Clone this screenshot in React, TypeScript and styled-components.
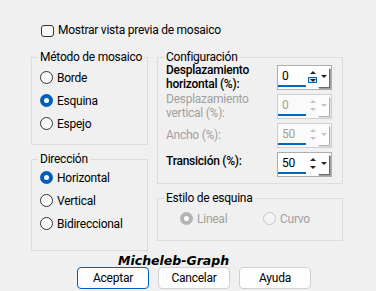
import React from "react";
import styled, { createGlobalStyle, css } from "styled-components";

const GlobalStyle = createGlobalStyle`
  html, body { margin: 0; padding: 0; background: #f0f0f0; }
  body { font-family: Roboto, "Noto Sans", sans-serif; font-size: 12px; letter-spacing: -0.25px; color: #000; }
  * { box-sizing: border-box; }
`;

const Dialog = styled.div`
  width: 376px;
  height: 291px;
  padding: 23px 0 0 31px;
  display: flex;
  flex-direction: column;
`;

const CheckRow = styled.label`
  display: flex;
  align-items: center;
  gap: 4px;
  height: 15px;
  padding-left: 10px;
  line-height: 15px;
`;

const CheckBox = styled.span`
  width: 13px;
  height: 12px;
  border: 1px solid #333;
  border-radius: 3px;
  background: #f9f9f9;
`;

const Columns = styled.div`
  display: flex;
  gap: 9px;
  margin-top: 12px;
`;

const Column = styled.div<{ $w: number }>`
  width: ${(p) => p.$w}px;
  display: flex;
  flex-direction: column;
  gap: 7px;
`;

const Group = styled.fieldset<{ $h: number; $pt?: number }>`
  margin: 0;
  min-width: 0;
  height: ${(p) => p.$h}px;
  border: 1px solid #dcdcdc;
  padding: ${(p) => p.$pt ?? 0}px 4px 0 8px;
`;

const Legend = styled.legend`
  padding: 0 2px;
  margin-left: -2px;
  line-height: 14px;
  font-size: 12px;
  white-space: nowrap;
`;

const RadioRow = styled.div<{ $disabled?: boolean; $w?: number }>`
  display: flex;
  align-items: center;
  gap: 4px;
  height: 23px;
  color: ${(p) => (p.$disabled ? "#a0a0a0" : "#000")};
  ${(p) => p.$w && css`width: ${p.$w}px;`}
`;

const RadioCircle = styled.span<{ $checked?: boolean; $disabled?: boolean }>`
  width: 13px;
  height: 13px;
  border-radius: 50%;
  display: flex;
  align-items: center;
  justify-content: center;
  flex: none;
  ${(p) =>
    p.$checked
      ? css`
          background: ${p.$disabled ? "#b4b4b4" : "#005fb8"};
          &::after {
            content: "";
            width: 5px;
            height: 5px;
            border-radius: 50%;
            background: #fff;
          }
        `
      : css`
          border: 1px solid ${p.$disabled ? "#c6c6c6" : "#333"};
          background: ${p.$disabled ? "#f3f3f3" : "#f9f9f9"};
        `}
`;

const Radio = ({ label, checked, disabled, w }: { label: string; checked?: boolean; disabled?: boolean; w?: number }) => (
  <RadioRow $disabled={disabled} $w={w}>
    <RadioCircle $checked={checked} $disabled={disabled} />
    <span>{label}</span>
  </RadioRow>
);

const ConfigGrid = styled.div`
  display: grid;
  grid-template-columns: 1fr 55px;
  grid-auto-rows: 25px;
  row-gap: 4px;
  margin-top: 1px;
  margin-right: 6px;
  align-items: center;
`;

const FieldLabel = styled.div<{ $disabled?: boolean; $strong?: boolean; $lift?: number }>`
  line-height: 13.5px;
  white-space: nowrap;
  color: ${(p) => (p.$disabled ? "#a0a0a0" : "#000")};
  font-weight: ${(p) => (p.$strong ? 500 : 400)};
  ${(p) => p.$lift && css`margin-top: -${p.$lift}px;`}
`;

const Spin = styled.div<{ $disabled?: boolean }>`
  width: 55px;
  height: 25px;
  border: 1px solid ${(p) => (p.$disabled ? "#cfcfcf" : "#adadad")};
  background: ${(p) => (p.$disabled ? "#fafafa" : "#fff")};
  display: flex;
  align-items: stretch;
  color: ${(p) => (p.$disabled ? "#a0a0a0" : "#000")};
`;

const SpinField = styled.div`
  width: 28px;
  margin: 0 0 2px 0;
  padding-left: 4px;
  border-bottom: 2px solid #0067c0;
  line-height: 21px;
`;

const Arrows = styled.div`
  width: 9px;
  margin-left: 2px;
  display: flex;
  flex-direction: column;
  align-items: center;
  padding-top: 3px;
  gap: 2px;
`;

const ArrowBox = styled.div<{ $hot?: boolean }>`
  width: 9px;
  height: 6px;
  display: flex;
  align-items: center;
  justify-content: center;
  border: 1px solid ${(p) => (p.$hot ? "#0067c0" : "transparent")};
  background: ${(p) => (p.$hot ? "#cce4f7" : "transparent")};
`;

const Tri = styled.span<{ $down?: boolean; $disabled?: boolean }>`
  width: 0;
  height: 0;
  border-left: 3px solid transparent;
  border-right: 3px solid transparent;
  ${(p) =>
    p.$down
      ? css`border-top: 3px solid ${p.$disabled ? "#c4c4c4" : "#222"};`
      : css`border-bottom: 3px solid ${p.$disabled ? "#c4c4c4" : "#222"};`}
`;

const DropBtn = styled.div<{ $disabled?: boolean }>`
  width: 12px;
  margin: 2px 1px 1px 1px;
  background: #fdfdfd;
  border-top: 1px solid #fff;
  border-left: 1px solid #fff;
  border-right: 1px solid ${(p) => (p.$disabled ? "#b0b0b0" : "#6a6a6a")};
  border-bottom: 1px solid ${(p) => (p.$disabled ? "#b0b0b0" : "#6a6a6a")};
  box-shadow: 1px 1px 0 ${(p) => (p.$disabled ? "#e0e0e0" : "#a0a0a0")};
  display: flex;
  align-items: center;
  justify-content: center;
  padding-bottom: 3px;
`;

const Spinner = ({ value, disabled, hot }: { value: string; disabled?: boolean; hot?: boolean }) => (
  <Spin $disabled={disabled}>
    <SpinField>{value}</SpinField>
    <Arrows>
      <ArrowBox>
        <Tri $disabled={disabled} />
      </ArrowBox>
      <ArrowBox $hot={hot}>
        <Tri $down $disabled={disabled} />
      </ArrowBox>
    </Arrows>
    <DropBtn $disabled={disabled}>
      <Tri $down $disabled={disabled} />
    </DropBtn>
  </Spin>
);

const CornerRow = styled.div`
  display: flex;
  padding-left: 14px;
  padding-top: 1px;
`;

const Watermark = styled.div`
  margin-top: 3px;
  padding-left: 87px;
  font-family: "DejaVu Sans", Verdana, sans-serif;
  font-weight: bold;
  font-style: italic;
  font-size: 12.5px;
  letter-spacing: 0;
  line-height: 14px;
  height: 14px;
`;

const ButtonRow = styled.div`
  display: flex;
  gap: 9px;
  padding-left: 46px;
  margin-top: -1px;
`;

const Button = styled.button<{ $default?: boolean }>`
  width: 72px;
  height: 22px;
  padding: 0;
  font-family: Roboto, "Noto Sans", sans-serif;
  font-size: 12px;
  letter-spacing: -0.25px;
  color: #000;
  background: #fdfdfd;
  border: 1px solid ${(p) => (p.$default ? "#005fb8" : "#d0d0d0")};
  border-radius: 4px;
`;

export default function App() {
  return (
    <>
      <GlobalStyle />
      <Dialog>
        <CheckRow>
          <CheckBox />
          <span>Mostrar vista previa de mosaico</span>
        </CheckRow>
        <Columns>
          <Column $w={117}>
            <Group $h={95} $pt={2}>
              <Legend>Método de mosaico</Legend>
              <Radio label="Borde" />
              <Radio label="Esquina" checked />
              <Radio label="Espejo" />
            </Group>
            <Group $h={99}>
              <Legend>Dirección</Legend>
              <Radio label="Horizontal" checked />
              <Radio label="Vertical" />
              <Radio label="Bidireccional" />
            </Group>
          </Column>
          <Column $w={186}>
            <Group $h={134}>
              <Legend>Configuración</Legend>
              <ConfigGrid>
                <FieldLabel $strong>
                  Desplazamiento
                  <br />
                  horizontal (%):
                </FieldLabel>
                <Spinner value="0" hot />
                <FieldLabel $disabled>
                  Desplazamiento
                  <br />
                  vertical (%):
                </FieldLabel>
                <Spinner value="0" disabled />
                <FieldLabel $disabled>Ancho (%):</FieldLabel>
                <Spinner value="50" disabled />
                <FieldLabel $strong $lift={5}>
                  Transición (%):
                </FieldLabel>
                <Spinner value="50" />
              </ConfigGrid>
            </Group>
            <Group $h={50} $pt={1}>
              <Legend>Estilo de esquina</Legend>
              <CornerRow>
                <Radio label="Lineal" checked disabled w={83} />
                <Radio label="Curvo" disabled />
              </CornerRow>
            </Group>
          </Column>
        </Columns>
        <Watermark>Micheleb-Graph</Watermark>
        <ButtonRow>
          <Button $default>Aceptar</Button>
          <Button>Cancelar</Button>
          <Button>Ayuda</Button>
        </ButtonRow>
      </Dialog>
    </>
  );
}
